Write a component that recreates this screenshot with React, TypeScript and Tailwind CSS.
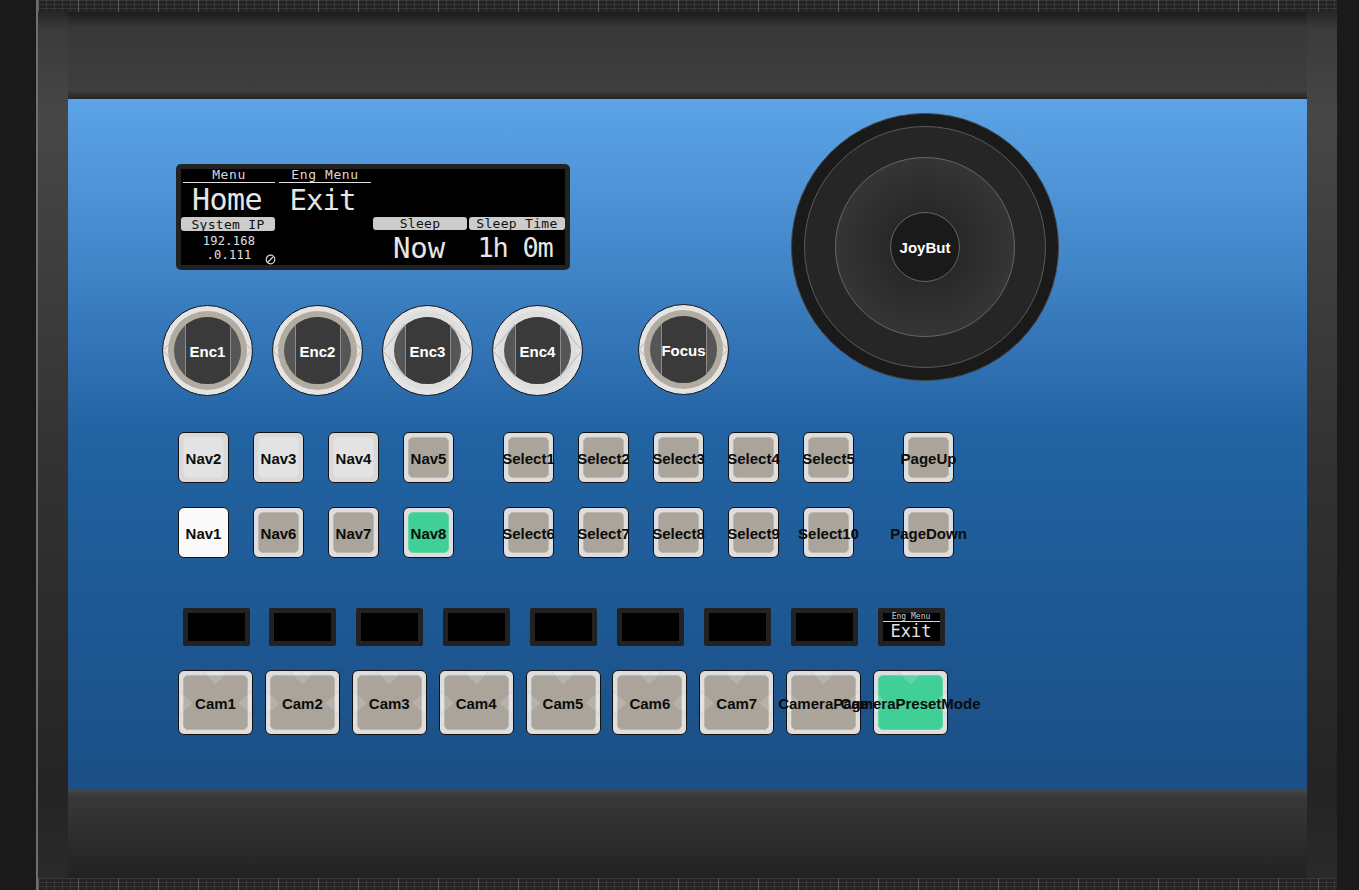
const sans = "font-['Liberation_Sans',Arial,sans-serif]"
const mono = "font-['DejaVu_Sans_Mono',monospace]"

const navTop = [
    { label: "Nav2", tone: "light" },
    { label: "Nav3", tone: "light" },
    { label: "Nav4", tone: "light" },
    { label: "Nav5", tone: "tan" },
]
const navBottom = [
    { label: "Nav1", tone: "white" },
    { label: "Nav6", tone: "tan" },
    { label: "Nav7", tone: "tan" },
    { label: "Nav8", tone: "green" },
]
const selectTop = ["Select1", "Select2", "Select3", "Select4", "Select5"]
const selectBottom = ["Select6", "Select7", "Select8", "Select9", "Select10"]
const cams = [
    { label: "Cam1", tone: "tan" },
    { label: "Cam2", tone: "tan" },
    { label: "Cam3", tone: "tan" },
    { label: "Cam4", tone: "tan" },
    { label: "Cam5", tone: "tan" },
    { label: "Cam6", tone: "tan" },
    { label: "Cam7", tone: "tan" },
    { label: "CameraPage", tone: "tan" },
    { label: "CameraPresetMode", tone: "green" },
]

const outerTone: Record<string, string> = {
    light: "bg-[#d9d9d9]",
    tan: "bg-[#dedede]",
    green: "bg-[#dedede]",
    white: "bg-[#fafafa]",
}
const innerTone: Record<string, string> = {
    light: "bg-[#e3e3e3] border-[#dedede]",
    tan: "bg-[#aaa49a] border-[#bdb8af]",
    green: "bg-[#40cf96] border-[#62d5a8]",
    white: "bg-[#fafafa] border-[#fafafa]",
}

function Button({ label, tone = "tan" }: { label: string; tone?: string }) {
    return (
        <div className={`w-[51px] h-[51px] shrink-0 rounded-[6px] border border-[#111] p-[4px] ${outerTone[tone]}`}>
            <div className={`w-full h-full rounded-[5px] border flex items-center justify-center ${innerTone[tone]}`}>
                <span className={`${sans} pt-[4px] text-[15px] font-bold text-[#0c0c0c] whitespace-nowrap`}>{label}</span>
            </div>
        </div>
    )
}

function CamButton({ label, tone }: { label: string; tone: string }) {
    return (
        <div className={`relative w-[75px] h-[65px] shrink-0 rounded-[6px] border border-[#111] p-[4px] ${outerTone[tone]}`}>
            <div className={`w-full h-full rounded-[5px] border ${innerTone[tone]}`} />
            <svg className="absolute inset-0" width="73" height="63" viewBox="0 0 73 63" fill="rgba(255,255,255,0.15)" stroke="rgba(190,190,190,0.45)">
                <path d="M24 0 L36.5 13 L49 0 Z" />
                <path d="M0 20 L13 32 L0 44 Z" />
                <path d="M73 20 L60 32 L73 44 Z" />
            </svg>
            <span className={`${sans} absolute inset-0 pt-[4px] flex items-center justify-center text-[15px] font-bold text-[#0c0c0c] whitespace-nowrap`}>
                {label}
            </span>
        </div>
    )
}

function Encoder({ label, ring }: { label: string; ring: boolean }) {
    return (
        <div className="relative w-[91px] h-[91px] shrink-0 rounded-full border border-[#111] bg-[#e4e4e4] flex items-center justify-center">
            <div className={`w-[79px] h-[79px] rounded-full ${ring ? "bg-[#b2aca0]" : "bg-[#dedede]"}`} />
            <svg className="absolute inset-0" width="89" height="89" viewBox="0 0 89 89" fill="none" stroke="#b5b5b5">
                {ring ? (
                    <>
                        <path d="M0 44.5 L6 38 M0 44.5 L6 51" />
                        <path d="M89 44.5 L83 38 M89 44.5 L83 51" />
                    </>
                ) : (
                    <>
                        <path d="M0 44.5 L22 18 M0 44.5 L22 71" />
                        <path d="M89 44.5 L67 18 M89 44.5 L67 71" />
                    </>
                )}
            </svg>
            <div className="absolute w-[67px] h-[67px] rounded-full overflow-hidden bg-[#565656] flex justify-center">
                <div className="w-[46px] h-full bg-[#3a3a3a] border-x border-[#8c8c8c]" />
            </div>
            <span className={`${sans} absolute inset-0 pt-[4px] flex items-center justify-center text-[15px] font-bold text-white`}>{label}</span>
        </div>
    )
}

function Lcd({ title, children, pill, wide }: { title: string; children: React.ReactNode; pill?: boolean; wide?: boolean }) {
    const pillBox = wide ? "w-[96px]" : "w-[94px] mr-[2px]"
    return (
        <div className="relative flex flex-col items-center">
            <div
                className={
                    pill
                        ? `${pillBox} h-[14px] rounded-[3px] bg-[#cccccc] text-[#111] flex items-center justify-center text-[13px] leading-none tracking-[0.3px]`
                        : "w-[92px] h-[14px] pb-[2px] border-b border-[#e0e0e0] text-[#d8d8d8] flex items-center justify-center text-[13px] leading-none tracking-[0.6px]"
                }
            >
                {title}
            </div>
            {children}
        </div>
    )
}

function MainDisplay() {
    return (
        <div className={`${mono} w-[394px] h-[106px] rounded-[5px] bg-[#222222] p-[5px]`}>
            <div className="w-full h-full bg-black grid grid-cols-4 grid-rows-[48px_48px]">
                <Lcd title="Menu">
                    <span className="pr-[4px] text-[#e6e6e6] text-[30px] leading-[34px] -tracking-[0.6px]">Home</span>
                </Lcd>
                <Lcd title="Eng Menu">
                    <span className="pr-[5px] text-[#e6e6e6] text-[29px] leading-[34px] -tracking-[1px]">Exit</span>
                </Lcd>
                <div />
                <div />
                <Lcd title="System IP" pill>
                    <span className="text-[#e0e0e0] text-[12px] leading-[14px] tracking-[0.3px] text-center pt-[3px]">
                        192.168
                        <br />
                        .0.111
                    </span>
                    <svg className="absolute left-[84px] top-[37px]" width="11" height="11" viewBox="0 0 11 11" fill="none" stroke="#d8d8d8" strokeWidth="1.2">
                        <circle cx="5.5" cy="5.5" r="4.3" />
                        <path d="M3 8 L8 3" />
                    </svg>
                </Lcd>
                <div />
                <Lcd title="Sleep" pill>
                    <span className="pr-[4px] pt-[1px] text-[#e6e6e6] text-[29px] leading-[34px] -tracking-[0.2px]">Now</span>
                </Lcd>
                <Lcd title="Sleep Time" pill wide>
                    <span className="pr-[4px] pt-[1px] text-[#e6e6e6] text-[27px] leading-[34px] -tracking-[1.3px]">1h 0m</span>
                </Lcd>
            </div>
        </div>
    )
}

function Joystick() {
    return (
        <div className="w-[268px] h-[268px] shrink-0 rounded-full bg-[#1a1a1a] border border-[#444] flex items-center justify-center">
            <div className="w-[242px] h-[242px] rounded-full bg-[#262626] border border-[#5a5a5a] flex items-center justify-center">
                <div className="w-[180px] h-[180px] rounded-full bg-[radial-gradient(circle,#262626_20%,#3e3e3e_100%)] border border-[#666] flex items-center justify-center">
                    <div className="w-[70px] h-[70px] rounded-full bg-[#1a1a1a] border border-[#666] flex items-center justify-center">
                        <span className={`${sans} pt-[2px] text-[15px] font-bold text-white`}>JoyBut</span>
                    </div>
                </div>
            </div>
        </div>
    )
}

function ButtonRow({ nav, selects, page }: { nav: { label: string; tone: string }[]; selects: string[]; page: string }) {
    return (
        <div className="flex gap-[49px]">
            <div className="flex gap-[24px]">
                {nav.map((b) => (
                    <Button key={b.label} label={b.label} tone={b.tone} />
                ))}
            </div>
            <div className="flex gap-[24px]">
                {selects.map((s) => (
                    <Button key={s} label={s} />
                ))}
            </div>
            <Button label={page} />
        </div>
    )
}

function GridStrip() {
    return (
        <div className="h-[12px] bg-[#232323] bg-[linear-gradient(90deg,#5a5a5a_1px,transparent_1px),linear-gradient(90deg,#383838_1px,transparent_1px),linear-gradient(#383838_1px,transparent_1px)] bg-[size:40px_100%,8px_100%,100%_4px]" />
    )
}

export default function App() {
    return (
        <div className="w-[1359px] h-[890px] overflow-hidden bg-[#1a1a1a] flex">
            <div className="w-[36px] shrink-0" />
            <div className="w-[1301px] shrink-0 border-l-2 border-[#6e6e6e] flex flex-col">
                <GridStrip />
                <div className="h-[866px] flex">
                    <div className="w-[30px] shrink-0 bg-[linear-gradient(#252525_0%,#3b3b3b_2%,#474747_12%,#333333_50%,#242424_90%,#2a2a2a_100%)]" />
                    <div className="w-[1239px] shrink-0 flex flex-col">
                        <div className="h-[87px] bg-[linear-gradient(#1c1c1c_0%,#383838_18%,#3e3e3e_90%,#252525_100%)]" />
                        <div className="h-[691px] bg-[linear-gradient(#5ca4e7_0%,#4488cb_22%,#2263a3_48%,#1e5a96_70%,#1b4f85_100%)] flex flex-col">
                            <div className="flex h-[297px]">
                                <div className="w-[723px] shrink-0 flex flex-col pt-[65px]">
                                    <div className="ml-[108px]">
                                        <MainDisplay />
                                    </div>
                                    <div className="ml-[94px] mt-[35px] flex gap-[19px]">
                                        <Encoder label="Enc1" ring />
                                        <Encoder label="Enc2" ring />
                                        <Encoder label="Enc3" ring={false} />
                                        <Encoder label="Enc4" ring={false} />
                                        <div className="ml-[36px] -mt-[1px]">
                                            <Encoder label="Focus" ring />
                                        </div>
                                    </div>
                                </div>
                                <div className="mt-[14px]">
                                    <Joystick />
                                </div>
                            </div>
                            <div className="ml-[110px] mt-[36px] flex flex-col gap-[24px]">
                                <ButtonRow nav={navTop} selects={selectTop} page="PageUp" />
                                <ButtonRow nav={navBottom} selects={selectBottom} page="PageDown" />
                            </div>
                            <div className="ml-[114.5px] mt-[50px] flex gap-[19.875px]">
                                {cams.map((c, i) => (
                                    <div key={c.label} className="w-[67px] h-[38px] shrink-0 rounded-[2px] bg-[#222222] p-[5px]">
                                        <div className={`${mono} w-full h-full bg-black flex flex-col items-center`}>
                                            {i === 8 && (
                                                <>
                                                    <div className="w-full h-[9px] border-b border-[#d8d8d8] text-[#cfcfcf] text-[8px] leading-[8px] text-center">
                                                        Eng Menu
                                                    </div>
                                                    <span className="text-[#e0e0e0] text-[17px] leading-[18px]">Exit</span>
                                                </>
                                            )}
                                        </div>
                                    </div>
                                ))}
                            </div>
                            <div className="ml-[110px] mt-[24px] flex gap-[11.875px]">
                                {cams.map((c) => (
                                    <CamButton key={c.label} label={c.label} tone={c.tone} />
                                ))}
                            </div>
                        </div>
                        <div className="h-[88px] bg-[linear-gradient(#454545_0%,#383838_8%,#2e2e2e_50%,#222222_100%)]" />
                    </div>
                    <div className="w-[30px] shrink-0 bg-[linear-gradient(#252525_0%,#3b3b3b_2%,#474747_12%,#333333_50%,#242424_90%,#2a2a2a_100%)]" />
                </div>
                <GridStrip />
            </div>
        </div>
    )
}
